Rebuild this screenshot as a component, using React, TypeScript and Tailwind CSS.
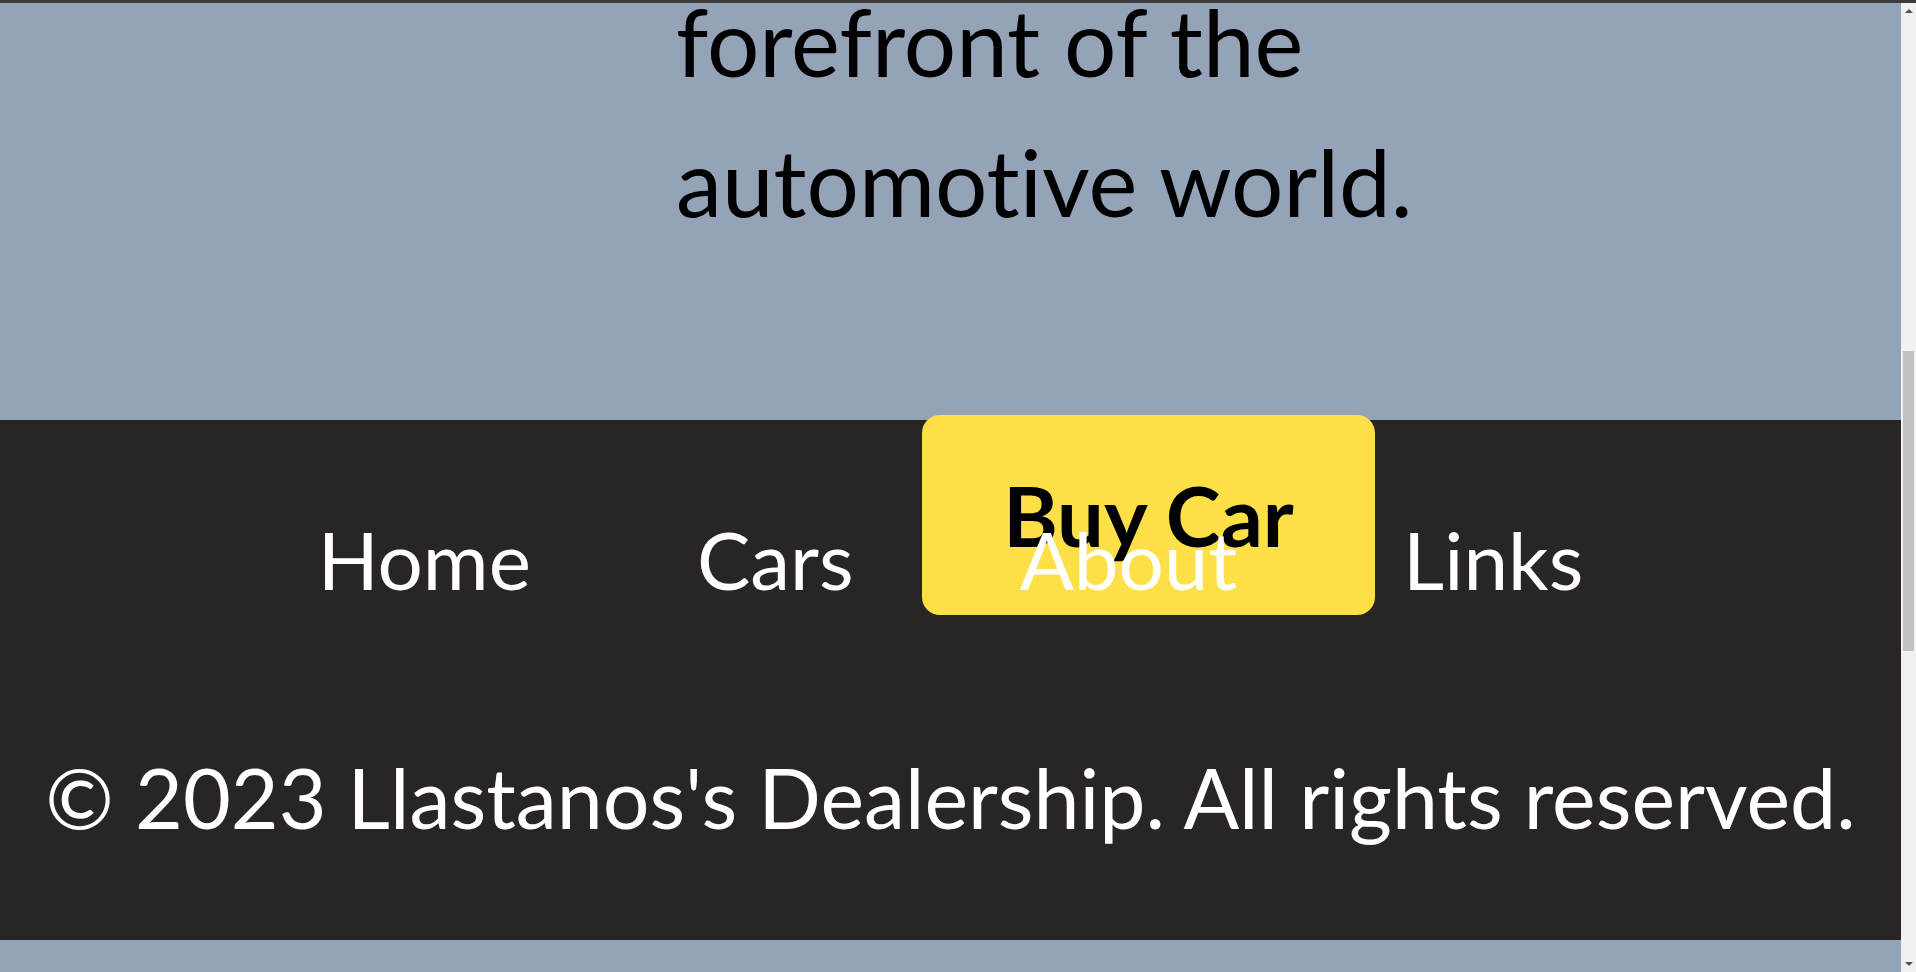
import React from "react";

const navLinks = ["Home", "Cars", "About", "Links"];

const ScrollBar = () => (
  <div className="w-[15px] bg-[#f1f1f1] flex flex-col items-center">
    <div className="h-[16px] flex items-center justify-center">
      <div className="w-0 h-0 border-x-[4px] border-x-transparent border-b-[4px] border-b-[#505050]" />
    </div>
    <div className="mt-[332px] h-[300px] w-[11px] bg-[#c1c1c1]" />
    <div className="flex-1" />
    <div className="h-[16px] flex items-center justify-center">
      <div className="w-0 h-0 border-x-[4px] border-x-transparent border-t-[4px] border-t-[#505050]" />
    </div>
  </div>
);

export default function App() {
  return (
    <div
      className="h-screen flex flex-col overflow-hidden bg-[#94a3b8] [font-variant-ligatures:none]"
      style={{ fontFamily: "Lato, 'Open Sans', sans-serif" }}
    >
      <div className="h-[3px] bg-[#3c3c3c]" />
      <div className="flex flex-1 min-h-0">
        <div className="flex-1 flex flex-col min-w-0">
          {/* hero text, scrolled to its end */}
          <section className="h-[417px] overflow-hidden">
            <p className="ml-[676px] mt-[-31px] max-w-[900px] text-[92.5px] leading-[140px] text-black">
              forefront of the
              <br />
              automotive world.
            </p>
          </section>

          {/* footer */}
          <footer className="relative h-[520px] bg-[#292524] text-white pt-[99px]">
            <button
              type="button"
              className="absolute top-[-5px] left-[922px] w-[453px] h-[200px] rounded-[18px] bg-[#fde047] flex items-center justify-center text-black font-bold text-[83px] leading-none"
            >
              Buy Car
            </button>
            <nav className="relative z-10">
              <ul className="flex justify-center gap-[166px] text-[80px] leading-none">
                {navLinks.map((link) => (
                  <li key={link}>
                    <a href="#" className="text-white">
                      {link}
                    </a>
                  </li>
                ))}
              </ul>
            </nav>
            <p className="mt-[158px] text-center text-[82.5px] leading-none whitespace-nowrap">
              © 2023 Llastanos's Dealership. All rights reserved.
            </p>
          </footer>
          <div className="flex-1" />
        </div>
        <ScrollBar />
      </div>
    </div>
  );
}
